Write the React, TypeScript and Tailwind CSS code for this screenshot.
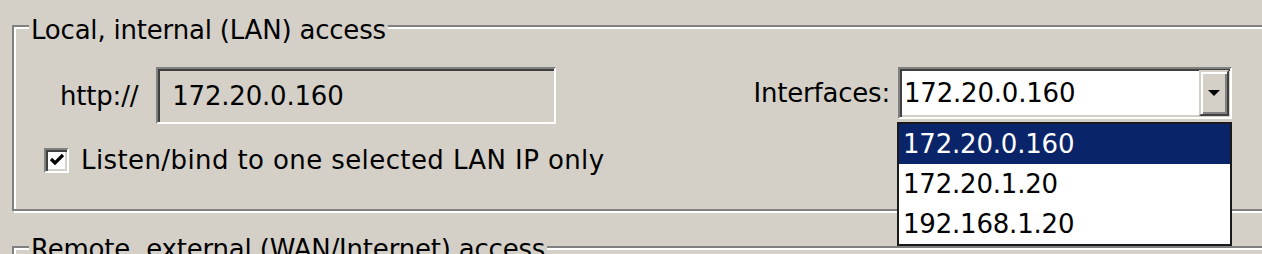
import React from "react"

const FONT = "font-['DejaVu_Sans',sans-serif]"

const IPS = ["172.20.0.160", "172.20.1.20", "192.168.1.20"]

function Sunken({ className, children }: { className: string; children?: React.ReactNode }) {
  return (
    <div
      className={`border-2 border-t-[#808080] border-l-[#808080] border-b-white border-r-white shadow-[inset_2px_2px_0_#404040,inset_-2px_-2px_0_#d4d0c8] ${className}`}
    >
      {children}
    </div>
  )
}

function ArrowButton() {
  return (
    <div className="w-[30px] h-[46px] flex items-center justify-center border-2 border-t-[#d4d0c8] border-l-[#d4d0c8] border-b-[#404040] border-r-[#404040] shadow-[inset_2px_2px_0_#fff,inset_-2px_-2px_0_#808080] bg-[#d4d0c8]">
      <svg width="14" height="8" viewBox="0 0 14 8">
        <path d="M1 1h12L7 7z" fill="#000" />
      </svg>
    </div>
  )
}

export default function App() {
  return (
    <div className={`relative w-[1262px] h-[254px] overflow-hidden bg-[#d4d0c8] text-black text-[26px] tracking-[-0.2px] ${FONT}`}>
      {/* LAN group */}
      <div className="relative ml-[12px] mt-[25px] w-[1270px] h-[186px] border-2 border-[#808080] shadow-[inset_2px_2px_0_#fff,2px_2px_0_#fff]">
        <div className="absolute left-[15px] top-[-12px] px-[2px] bg-[#d4d0c8] leading-[30px]">
          Local, internal (LAN) access
        </div>

        <div className="flex items-start pt-[40px]">
          <div className="flex items-center">
            <span className="ml-[46px] mr-[18px] leading-[30px]">http://</span>
            <Sunken className="w-[400px] h-[57px] flex items-center pl-[14px] bg-[#d4d0c8]">
              <span className="leading-[30px]">172.20.0.160</span>
            </Sunken>
          </div>

          <div className="flex items-center ml-auto mr-[48px]">
            <span className="mr-[8px] leading-[30px]">Interfaces:</span>
            <Sunken className="w-[334px] h-[52px] flex items-center justify-between bg-white pl-[4px] pr-[1px]">
              <span className="leading-[30px]">172.20.0.160</span>
              <ArrowButton />
            </Sunken>
          </div>
        </div>

        <div className="flex items-center mt-[21px] ml-[30px]">
          <Sunken className="w-[25px] h-[25px] bg-white flex items-center justify-center">
            <svg width="16" height="16" viewBox="0 0 16 16">
              <path d="M2 7l4 4L14 3" stroke="#000" strokeWidth="3.2" fill="none" />
            </svg>
          </Sunken>
          <span className="ml-[12px] leading-[30px] tracking-[0.4px]">Listen/bind to one selected LAN IP only</span>
        </div>
      </div>

      {/* WAN group */}
      <div className="relative ml-[12px] mt-[35px] w-[1270px] h-[60px] border-2 border-[#808080] shadow-[inset_2px_2px_0_#fff,2px_2px_0_#fff]">
        <div className="absolute left-[15px] top-[-14px] px-[2px] bg-[#d4d0c8] leading-[30px]">
          Remote, external (WAN/Internet) access
        </div>
      </div>

      {/* open dropdown list */}
      <div className="absolute left-[897px] top-[122px] w-[335px] border-2 border-[#1a1a1a] bg-white">
        {IPS.map((ip, i) => (
          <div
            key={ip}
            className={`h-[40px] flex items-center pl-[4px] leading-[30px] ${i === 0 ? "bg-[#0a246a] text-white" : ""}`}
          >
            {ip}
          </div>
        ))}
      </div>
    </div>
  )
}
